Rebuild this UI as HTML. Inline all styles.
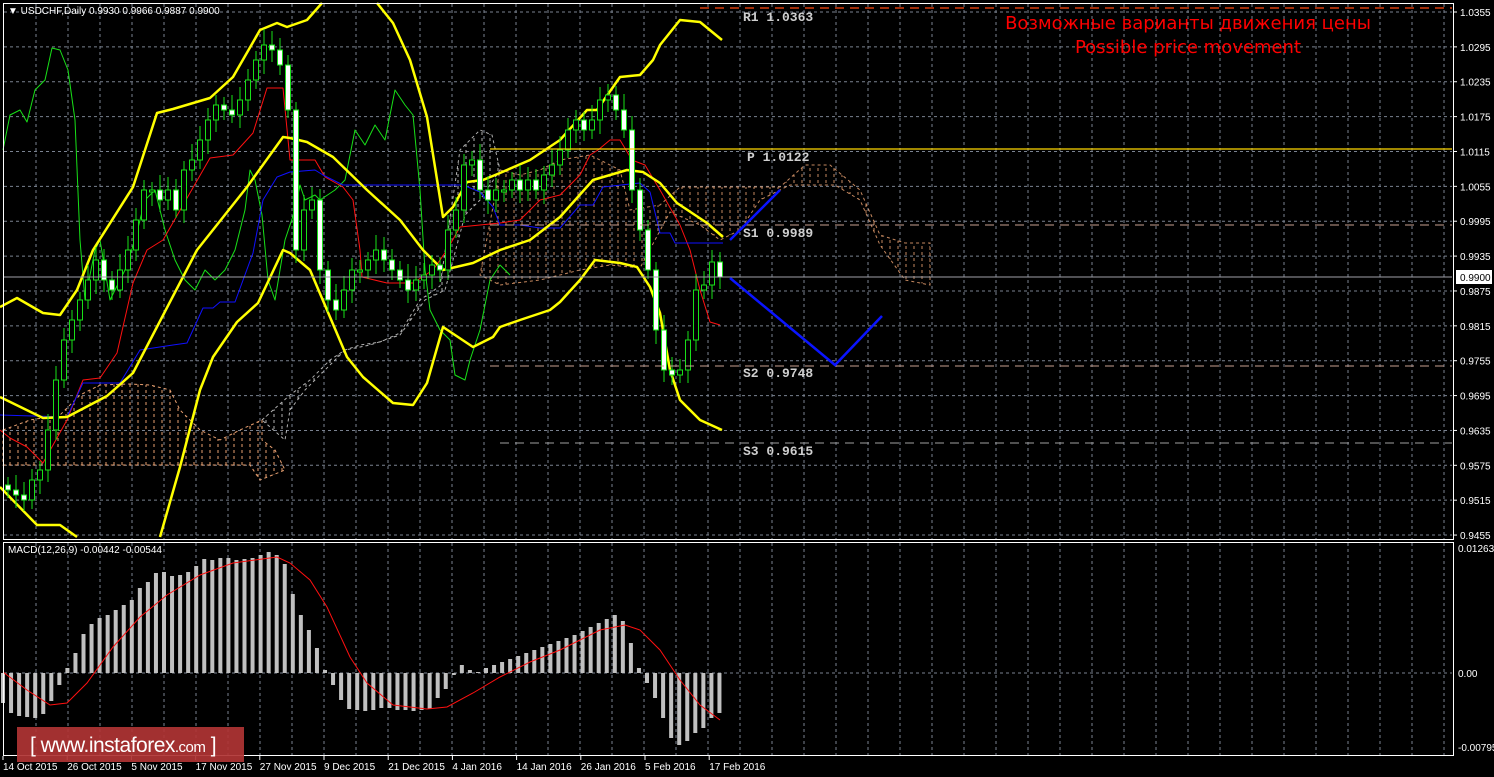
<!DOCTYPE html>
<html><head><meta charset="utf-8"><style>
html,body{margin:0;padding:0;background:#000;width:1494px;height:777px;overflow:hidden}
svg{display:block}
</style></head><body>
<svg id="s" width="1494" height="777" xmlns="http://www.w3.org/2000/svg" font-family="Liberation Sans, sans-serif">
<defs>
<pattern id="hatch" width="8" height="6" patternUnits="userSpaceOnUse"><line x1="2" y1="0" x2="2" y2="3" stroke="#e8a070" stroke-width="1"/></pattern>
<pattern id="hatchw" width="8" height="6" patternUnits="userSpaceOnUse"><line x1="2" y1="0" x2="2" y2="3" stroke="#dddddd" stroke-width="1"/></pattern>
</defs>
<rect width="1494" height="777" fill="#000"/>
<g id="grid"></g>
<g id="cloud">
<polygon points="3,430 30,420 60,415 80,395 100,385 130,384 150,385 170,390 180,410 200,430 220,440 240,430 262,420 262,440 275,450 285,470 260,480 250,465 3,465" fill="url(#hatch)" stroke="#e8a070" stroke-dasharray="3,3" stroke-width="1"/>
<polygon points="262,420 290,395 310,380 330,360 345,350 360,345 380,342 400,333 420,300 440,286 460,150 480,130 492,135 500,170 480,200 465,215 445,290 425,300 400,335 370,345 345,350 325,370 305,390 290,410 285,440" fill="url(#hatchw)" stroke="#dddddd" stroke-dasharray="3,3" stroke-width="1" opacity="0.8"/>
<polygon points="500,170 520,175 540,170 560,160 590,155 620,170 630,210 660,205 680,187 780,187 805,165 830,165 860,190 880,235 905,243 930,243 930,285 905,280 880,245 860,200 835,185 790,185 760,200 740,230 720,240 700,225 670,212 640,268 610,265 580,270 540,280 500,285 480,275" fill="url(#hatch)" stroke="#e8a070" stroke-dasharray="3,3" stroke-width="1" opacity="0.85"/>
</g>
<g id="lines" fill="none"></g>
<g id="candles"></g>
<g id="macd"></g>
<g id="levels" font-family="Liberation Mono, monospace" font-weight="bold" font-size="13" fill="#cfcfcf">
<line x1="700" y1="8" x2="1452" y2="8" stroke="#ff4a10" stroke-width="1.3" stroke-dasharray="9,6"/>
<line x1="490" y1="149" x2="1452" y2="149" stroke="#ffd800" stroke-width="1.3"/>
<line x1="490" y1="225" x2="1452" y2="225" stroke="#c8a090" stroke-width="1" stroke-dasharray="9,6"/>
<line x1="490" y1="366" x2="1452" y2="366" stroke="#c8a090" stroke-width="1" stroke-dasharray="9,6"/>
<line x1="500" y1="443" x2="1452" y2="443" stroke="#a0a0a0" stroke-width="1" stroke-dasharray="9,6"/>
<line x1="3" y1="277" x2="1452" y2="277" stroke="#a0a0a8" stroke-width="1"/>
<text x="743" y="21">R1 1.0363</text>
<text x="747" y="161">P 1.0122</text>
<text x="743" y="237">S1 0.9989</text>
<text x="743" y="377">S2 0.9748</text>
<text x="743" y="455">S3 0.9615</text>
</g>
<polyline points="730,240 780,190" stroke="#0a14ff" stroke-width="2.5" fill="none"/>
<polyline points="730,278 835,365 882,316" stroke="#0a14ff" stroke-width="2.5" fill="none"/>
<g font-family="DejaVu Sans, sans-serif" font-size="18" fill="#ff0000" text-anchor="middle">
<text x="1188" y="29">Возможные варианты движения цены</text>
<text x="1188" y="53">Possible price movement</text>
</g>
<rect x="3.5" y="3.5" width="1450" height="536" fill="none" stroke="#fff" stroke-width="1"/>
<rect x="3.5" y="542.5" width="1450" height="213" fill="none" stroke="#fff" stroke-width="1"/>
<text x="8" y="14" font-size="10" fill="#fff">▼ USDCHF,Daily  0.9930 0.9966 0.9887 0.9900</text>
<text x="8" y="553" font-size="10" fill="#fff">MACD(12,26,9) -0.00442 -0.00544</text>
<g id="axis" font-size="10" fill="#fff"></g>
<rect x="1456" y="270" width="36" height="14" fill="#fff"/>
<text x="1460" y="281" font-size="10" fill="#000">0.9900</text>
<text x="1458" y="552" font-size="10" fill="#fff">0.01263</text>
<text x="1458" y="677" font-size="10" fill="#fff">0.00</text>
<text x="1458" y="751" font-size="10" fill="#fff">-0.00795</text>
<g id="dates" font-size="10" fill="#fff"></g>
<rect x="17" y="727" width="227" height="35" fill="#b03434" opacity="0.92"/>
<text x="30" y="752" font-size="21" fill="#fff" letter-spacing="-0.5">[ www.instaforex<tspan font-size="15">.com</tspan> ]</text>
</svg>
<script>
(function(){
var NS="http://www.w3.org/2000/svg";
function el(p,t,a){var e=document.createElementNS(NS,t);for(var k in a)e.setAttribute(k,a[k]);p.appendChild(e);return e;}
var g=document.getElementById('grid');
for(var x=36;x<1452;x+=32){el(g,'line',{x1:x,y1:4,x2:x,y2:539,stroke:'#7a8290','stroke-dasharray':'3,3'});el(g,'line',{x1:x,y1:543,x2:x,y2:755,stroke:'#7a8290','stroke-dasharray':'3,3'});}
var ax=document.getElementById('axis');
for(var k=0;k<16;k++){var y=12+k*34.87;el(g,'line',{x1:4,y1:y,x2:1452,y2:y,stroke:'#7a8290','stroke-dasharray':'3,3'});
el(ax,'line',{x1:1453,y1:y,x2:1457,y2:y,stroke:'#fff'});
if(Math.abs(y-277)>8){var t=el(ax,'text',{x:1460,y:y+4});t.textContent=(1.0355-k*0.006).toFixed(4);}}
el(g,'line',{x1:4,y1:673,x2:1452,y2:673,stroke:'#7a8290','stroke-dasharray':'3,3'});
var L=document.getElementById('lines');
function pl(pts,c,w){el(L,'polyline',{points:pts,stroke:c,'stroke-width':w,fill:'none','stroke-linejoin':'round'});}
pl("3,150 10,115 20,110 27,122 35,90 45,80 52,48 60,50 68,70 75,120 80,240 85,300 95,250 100,240 105,270 110,300 115,290 125,270 135,240 145,200 155,190 165,230 175,260 185,280 195,290 205,270 215,280 225,270 235,250 245,210 250,170 255,180 262,215 268,280 275,300 285,240 295,210 300,185 305,200 315,195 320,200 335,190 345,180 355,130 365,145 375,125 385,140 395,90 405,105 413,115 420,190 425,270 430,310 440,330 450,340 455,375 465,380 470,360 480,330 490,280 500,265 510,275","#18e018",1);
pl("0,430 10,438 27,447 43,463 67,420 83,380 100,378 117,353 133,283 147,250 163,240 210,158 233,155 253,133 267,88 283,88 290,160 315,160 325,177 343,187 353,200 360,250 362,277 387,283 413,283 433,270 447,250 460,227 500,223 520,220 540,200 560,195 580,175 590,155 598,150 610,140 620,140 632,160 645,165 660,190 680,225 690,250 700,290 710,322 720,325","#ff1010",1);
pl("0,415 67,417 83,383 120,383 140,350 173,345 187,343 203,308 213,308 220,302 235,302 253,253 263,200 277,177 290,172 315,170 323,175 343,185 463,185 480,192 493,207 500,225 520,225 540,228 560,228 580,205 593,205 603,187 640,183 650,192 660,233 670,233 675,243 723,243","#1010ff",1);
pl("0,307 17,298 43,313 60,315 77,290 93,250 133,187 157,113 173,109 210,98 233,77 260,30 277,23 287,27 307,20 322,3","#ffff00",2.5);
pl("377,3 393,23 410,60 427,117 443,217 453,207 467,182 483,180 500,173 530,160 560,140 587,110 597,110 620,77 640,75 653,60 660,45 680,20 700,22 722,40","#ffff00",2.5);
pl("0,397 43,418 67,417 107,396 133,373 197,250 247,187 283,137 290,138 307,142 333,157 367,190 400,220 423,250 443,270 473,263 500,250 530,240 560,217 593,180 627,170 643,172 660,183 677,203 707,223 723,237","#ffff00",2.5);
pl("0,487 37,525 60,525 77,537","#ffff00",2.5);
pl("160,537 180,467 200,390 213,357 237,322 258,303 283,250 290,253 310,270 327,310 347,357 363,377 393,403 413,405 427,383 443,327 473,347 493,337 500,327 520,320 550,310 560,302 580,280 595,260 620,263 637,267 650,287 660,313 670,370 680,400 700,420 722,430","#ffff00",2.5);
var cl=[490,495,500,480,470,430,380,340,320,300,280,260,280,290,270,250,220,190,190,200,190,210,170,160,140,120,105,110,115,100,80,60,45,50,65,110,250,210,200,270,300,310,290,270,270,260,250,260,270,280,290,280,275,265,270,230,210,165,160,190,200,190,190,180,190,180,190,175,165,150,130,120,130,120,100,95,110,130,190,230,270,330,370,375,370,340,290,285,262,277];
var C=document.getElementById('candles');
var prev=485;
for(var i=0;i<cl.length;i++){var x=8+i*8,o=prev,c=cl[i];var tp=Math.min(o,c),bt=Math.max(o,c);if(bt-tp<2)bt=tp+2;
el(C,'line',{x1:x,y1:tp-8-(i*7%9),x2:x,y2:bt+8+(i*5%7),stroke:'#18e018'});
el(C,'rect',{x:x-2.5,y:tp,width:5,height:bt-tp,fill:(c>o?'#fff':'#000'),stroke:'#18e018','stroke-width':1});prev=c;}
var h=[-30,-40,-43,-44,-45,-41,-28,-12,5,20,39,49,55,58,63,68,73,85,91,100,101,97,98,101,107,114,113,115,115,113,114,115,118,121,118,109,79,58,43,25,3,-12,-27,-36,-37,-38,-37,-35,-35,-37,-37,-38,-37,-36,-25,-16,-2,8,3,1,5,8,11,14,17,20,23,26,29,32,35,38,42,46,50,54,58,52,30,5,-10,-25,-45,-65,-72,-68,-60,-55,-45,-40];
var M=document.getElementById('macd');
for(var i=0;i<h.length;i++){var x=1+i*8.05,v=h[i];el(M,'rect',{x:x,y:v>0?673-v:673,width:4,height:Math.abs(v),fill:'#c0c0c0'});}
el(M,'polyline',{points:"3,672 27,690 50,705 67,703 87,683 113,647 140,617 167,595 200,575 233,563 277,557 290,563 310,580 327,607 350,657 367,683 393,705 427,709 447,707 473,693 500,677 530,662 560,650 600,630 625,625 640,630 660,650 680,680 700,705 720,720",stroke:'#ff1010',fill:'none','stroke-width':1});
var D=document.getElementById('dates');
var ds=["14 Oct 2015","26 Oct 2015","5 Nov 2015","17 Nov 2015","27 Nov 2015","9 Dec 2015","21 Dec 2015","4 Jan 2016","14 Jan 2016","26 Jan 2016","5 Feb 2016","17 Feb 2016"];
for(var i=0;i<ds.length;i++){var x=3+i*64.2;el(D,'line',{x1:x,y1:756,x2:x,y2:760,stroke:'#fff'});var t=el(D,'text',{x:x,y:770});t.textContent=ds[i];}
})();
</script>
</body></html>
